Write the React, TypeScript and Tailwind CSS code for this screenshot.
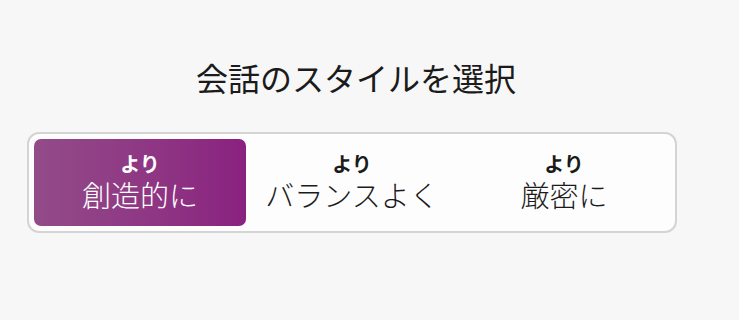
const options = [
  { sub: "より", main: "創造的に", active: true },
  { sub: "より", main: "バランスよく", active: false },
  { sub: "より", main: "厳密に", active: false },
];

export default function App() {
  return (
    <div
      className="w-[739px] h-[320px] bg-[#f7f7f7] text-[#1b1b1b]"
      style={{ fontFamily: '"Noto Sans CJK JP", "Noto Sans", sans-serif' }}
    >
      <div className="w-[650px] ml-[27px] pt-[56px]">
        <h1 className="text-center text-[32px] leading-[42px] font-normal pl-[8px]">
          会話のスタイルを選択
        </h1>
        <div className="mt-[34px] h-[101px] rounded-[12px] border-2 border-[#d4d4d4] bg-[#fdfdfd] p-[5px] grid grid-cols-3">
          {options.map((o) => (
            <button
              key={o.main}
              className={
                o.active
                  ? "flex flex-col items-center justify-center pb-[4px] rounded-[7px] bg-gradient-to-r from-[#934b89] to-[#8a217f] text-white"
                  : "flex flex-col items-center justify-center pb-[4px] rounded-[7px] text-[#1b1b1b]"
              }
            >
              <span className="block text-[20px] leading-[26px] font-bold">{o.sub}</span>
              <span className="block text-[29px] leading-[34px] font-light">{o.main}</span>
            </button>
          ))}
        </div>
      </div>
    </div>
  );
}
